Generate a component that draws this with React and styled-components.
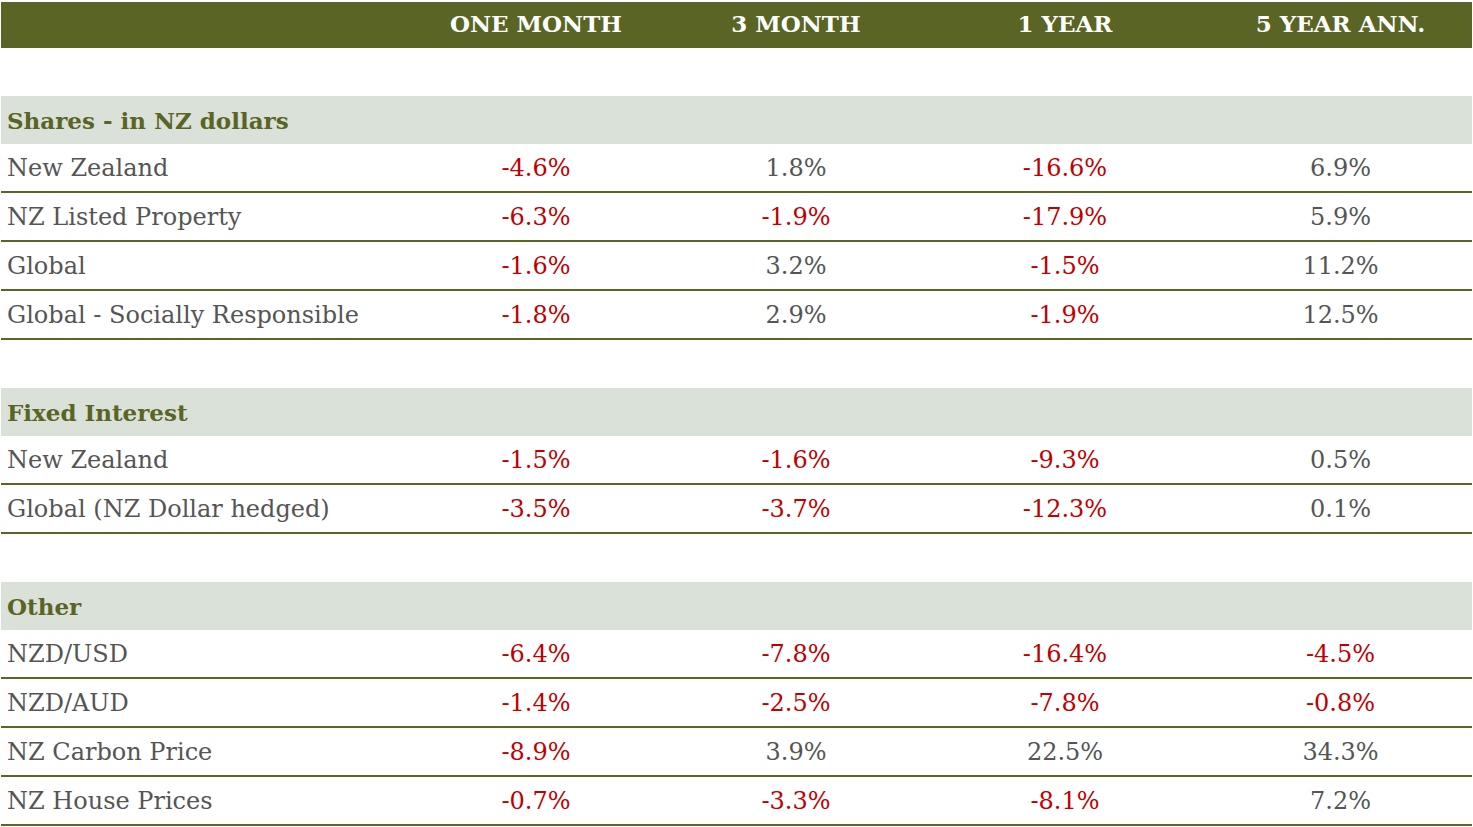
import React from "react";
import styled, { createGlobalStyle } from "styled-components";

const Global = createGlobalStyle`
  html, body { margin: 0; padding: 0; background: #ffffff; }
  body { font-family: "DejaVu Serif", "Liberation Serif", serif; }
`;

const COLS = "400px 270px 250px 288px 1fr";

const Page = styled.div`
  padding: 2px 1px 0 1px;
  width: 1471px;
`;

const HeaderBar = styled.div`
  display: grid;
  grid-template-columns: ${COLS};
  height: 46px;
  box-sizing: border-box;
  padding-bottom: 3px;
  align-items: center;
  background: #5a6424;
  color: #ffffff;
  font-weight: bold;
  font-size: 23px;
  text-transform: uppercase;
`;

const HeadCell = styled.div`
  text-align: center;
`;

const Spacer = styled.div`
  height: 48px;
`;

const SectionTitle = styled.div`
  height: 48px;
  display: flex;
  align-items: center;
  padding: 1px 0 0 6px;
  box-sizing: border-box;
  background: #d9e1d9;
  color: #5a6424;
  font-weight: bold;
  font-size: 23px;
`;

const Row = styled.div`
  display: grid;
  grid-template-columns: ${COLS};
  height: 49px;
  box-sizing: border-box;
  align-items: center;
  border-bottom: 2px solid #5b6625;
  font-size: 24px;
  color: #555555;
`;

const Label = styled.div`
  padding-left: 6px;
`;

const Value = styled.div`
  text-align: center;
  color: ${(p) => (p.$neg ? "#c00000" : "#555555")};
`;

const sections = [
  {
    title: "Shares - in NZ dollars",
    rows: [
      ["New Zealand", "-4.6%", "1.8%", "-16.6%", "6.9%"],
      ["NZ Listed Property", "-6.3%", "-1.9%", "-17.9%", "5.9%"],
      ["Global", "-1.6%", "3.2%", "-1.5%", "11.2%"],
      ["Global - Socially Responsible", "-1.8%", "2.9%", "-1.9%", "12.5%"],
    ],
  },
  {
    title: "Fixed Interest",
    rows: [
      ["New Zealand", "-1.5%", "-1.6%", "-9.3%", "0.5%"],
      ["Global (NZ Dollar hedged)", "-3.5%", "-3.7%", "-12.3%", "0.1%"],
    ],
  },
  {
    title: "Other",
    rows: [
      ["NZD/USD", "-6.4%", "-7.8%", "-16.4%", "-4.5%"],
      ["NZD/AUD", "-1.4%", "-2.5%", "-7.8%", "-0.8%"],
      ["NZ Carbon Price", "-8.9%", "3.9%", "22.5%", "34.3%"],
      ["NZ House Prices", "-0.7%", "-3.3%", "-8.1%", "7.2%"],
    ],
  },
];

export default function App() {
  return (
    <Page>
      <Global />
      <HeaderBar>
        <HeadCell />
        <HeadCell>One Month</HeadCell>
        <HeadCell>3 Month</HeadCell>
        <HeadCell>1 Year</HeadCell>
        <HeadCell>5 Year Ann.</HeadCell>
      </HeaderBar>
      {sections.map((s) => (
        <React.Fragment key={s.title}>
          <Spacer />
          <SectionTitle>{s.title}</SectionTitle>
          {s.rows.map((r, i) => (
            <Row key={i}>
              <Label>{r[0]}</Label>
              {r.slice(1).map((v, j) => (
                <Value key={j} $neg={v.startsWith("-")}>
                  {v}
                </Value>
              ))}
            </Row>
          ))}
        </React.Fragment>
      ))}
    </Page>
  );
}
